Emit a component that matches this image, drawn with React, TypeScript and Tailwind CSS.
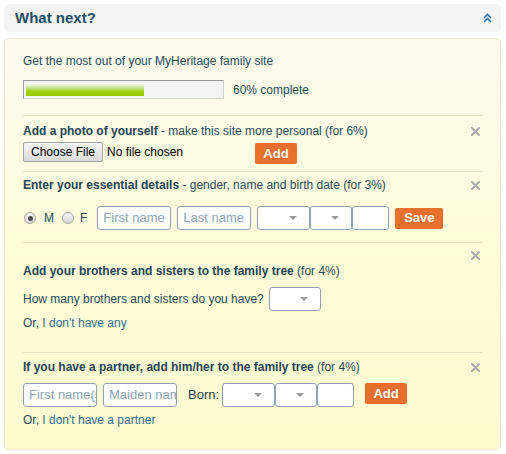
const font = { fontFamily: '"Liberation Sans", Arial, sans-serif' }

function CloseX() {
  return (
    <svg width="9" height="9" viewBox="0 0 9 9" className="shrink-0">
      <path d="M1 1l7 7M8 1L1 8" stroke="#a9a9a9" strokeWidth="2" strokeLinecap="round" />
    </svg>
  )
}

function Select({ w }: { w: string }) {
  return (
    <div className={`relative h-[24px] ${w} rounded-[3px] border border-[#8fa2b6] bg-white`}>
      <span className="absolute right-[12px] top-[9px] h-0 w-0 border-x-[4px] border-t-[4px] border-x-transparent border-t-[#9a9a9a]" />
    </div>
  )
}

function TextBox({ w, placeholder }: { w: string; placeholder?: string }) {
  return (
    <div
      className={`flex h-[24px] ${w} items-center overflow-hidden whitespace-nowrap rounded-[3px] border border-[#8fa2b6] bg-white pl-[5px] text-[13px] text-[#8ea3b5]`}
    >
      {placeholder}
    </div>
  )
}

function OrangeButton({ label, w }: { label: string; w: string }) {
  return (
    <div
      className={`flex h-[21px] ${w} items-center justify-center rounded-[2px] bg-[#e8702c] text-[13px] font-bold text-white`}
    >
      {label}
    </div>
  )
}

function Radio({ checked }: { checked?: boolean }) {
  return (
    <span className="flex h-[12px] w-[12px] items-center justify-center rounded-full border border-[#a4a4a4] bg-gradient-to-b from-[#f4f4f4] to-[#d8d8d8]">
      {checked && <span className="h-[5px] w-[5px] rounded-full bg-[#4a4a4a]" />}
    </span>
  )
}

export default function App() {
  return (
    <div className="ml-[4px] mt-[4px] w-[497px] text-[12px] text-[#2b4b5d]" style={font}>
      {/* Header */}
      <div className="flex h-[28px] items-center justify-between rounded-[5px] bg-[#f4f4f4] pl-[11px] pr-[9px]">
        <span className="text-[15px] font-bold text-[#1e4c69]">What next?</span>
        <svg width="9" height="10" viewBox="0 0 9 10">
          <path d="M1 5l3.5-3.5L8 5M1 9l3.5-3.5L8 9" stroke="#2f74ad" strokeWidth="1.6" fill="none" />
        </svg>
      </div>

      {/* Body */}
      <div className="mt-[6px] h-[412px] rounded-[5px] border border-[#ebe8d0] bg-gradient-to-b from-[#fbfaee] via-[#fffcd9] to-[#fffbd0] px-[18px] pt-[14px]">
        <div className="leading-[16px]">Get the most out of your MyHeritage family site</div>
        <div className="mt-[11px] flex items-center gap-[9px]">
          <div className="h-[19px] w-[201px] border border-[#9a9a9a] border-b-[#cfcfcf] border-r-[#cfcfcf] bg-[#f3f3f3] p-[2px]">
            <div className="h-full w-[118px] bg-gradient-to-b from-[#ffffff] via-[#a6d41a] via-60% to-[#96c800]" />
          </div>
          <span>60% complete</span>
        </div>

        {/* Photo */}
        <div className="mt-[16px] h-[56px] border-t border-[#e8e3c4] pt-[7px]">
          <div className="flex items-center justify-between pr-[2px] leading-[16px]">
            <span>
              <b className="text-[#1f4457]">Add a photo of yourself</b> - make this site more personal (for 6%)
            </span>
            <CloseX />
          </div>
          <div className="mt-[3px] flex items-start">
            <div className="flex h-[20px] w-[80px] items-center justify-center rounded-[2px] border border-[#a3a3a3] bg-gradient-to-b from-[#f6f6f6] to-[#dcdcdc] text-[12px] text-black">
              Choose File
            </div>
            <span className="ml-[4px] w-[148px] pt-[3px] text-[12px] leading-[14px] text-black">No file chosen</span>
            <div className="mt-[1px]">
              <OrangeButton label="Add" w="w-[42px]" />
            </div>
          </div>
        </div>

        {/* Essential details */}
        <div className="h-[71px] border-t border-[#e8e3c4] pt-[5px]">
          <div className="flex items-center justify-between pr-[2px] leading-[16px]">
            <span>
              <b className="text-[#1f4457]">Enter your essential details</b> - gender, name and birth date (for 3%)
            </span>
            <CloseX />
          </div>
          <div className="mt-[13px] flex items-center">
            <span className="ml-[1px]">
              <Radio checked />
            </span>
            <span className="ml-[8px] text-[12px]">M</span>
            <span className="ml-[8px]">
              <Radio />
            </span>
            <span className="ml-[6px] text-[12px]">F</span>
            <div className="ml-[10px] flex items-center gap-[6px]">
              <TextBox w="w-[74px]" placeholder="First name" />
              <TextBox w="w-[74px]" placeholder="Last name" />
            </div>
            <div className="ml-[6px] flex">
              <Select w="w-[53px]" />
              <Select w="w-[42px]" />
              <TextBox w="w-[37px]" />
            </div>
            <div className="ml-[6px]">
              <OrangeButton label="Save" w="w-[48px]" />
            </div>
          </div>
        </div>

        {/* Siblings */}
        <div className="h-[110px] border-t border-[#e8e3c4]">
          <div className="flex justify-end pr-[2px] pt-[8px]">
            <CloseX />
          </div>
          <div className="mt-[3px] leading-[16px]">
            <b className="text-[#1f4457]">Add your brothers and sisters to the family tree</b> (for 4%)
          </div>
          <div className="mt-[8px] flex items-center gap-[5px]">
            <span>How many brothers and sisters do you have?</span>
            <Select w="w-[52px]" />
          </div>
          <div className="mt-[4px] leading-[16px]">
            Or, <span className="text-[#3a6c96]">I don't have any</span>
          </div>
        </div>

        {/* Partner */}
        <div className="border-t border-[#e8e3c4] pt-[6px]">
          <div className="flex items-center justify-between pr-[2px] leading-[16px]">
            <span>
              <b className="text-[#1f4457]">If you have a partner, add him/her to the family tree</b> (for 4%)
            </span>
            <CloseX />
          </div>
          <div className="mt-[8px] flex items-start">
            <TextBox w="w-[74px]" placeholder="First name(s" />
            <div className="ml-[6px]">
              <TextBox w="w-[74px]" placeholder="Maiden nam" />
            </div>
            <span className="ml-[11px] pt-[4px] text-[13px] leading-[16px] text-[#1f3a48]">Born:</span>
            <div className="ml-[3px] flex">
              <Select w="w-[53px]" />
              <Select w="w-[42px]" />
              <TextBox w="w-[37px]" />
            </div>
            <div className="ml-[11px]">
              <OrangeButton label="Add" w="w-[42px]" />
            </div>
          </div>
          <div className="mt-[5px] leading-[16px]">
            Or, <span className="text-[#3a6c96]">I don't have a partner</span>
          </div>
        </div>
      </div>
    </div>
  )
}
